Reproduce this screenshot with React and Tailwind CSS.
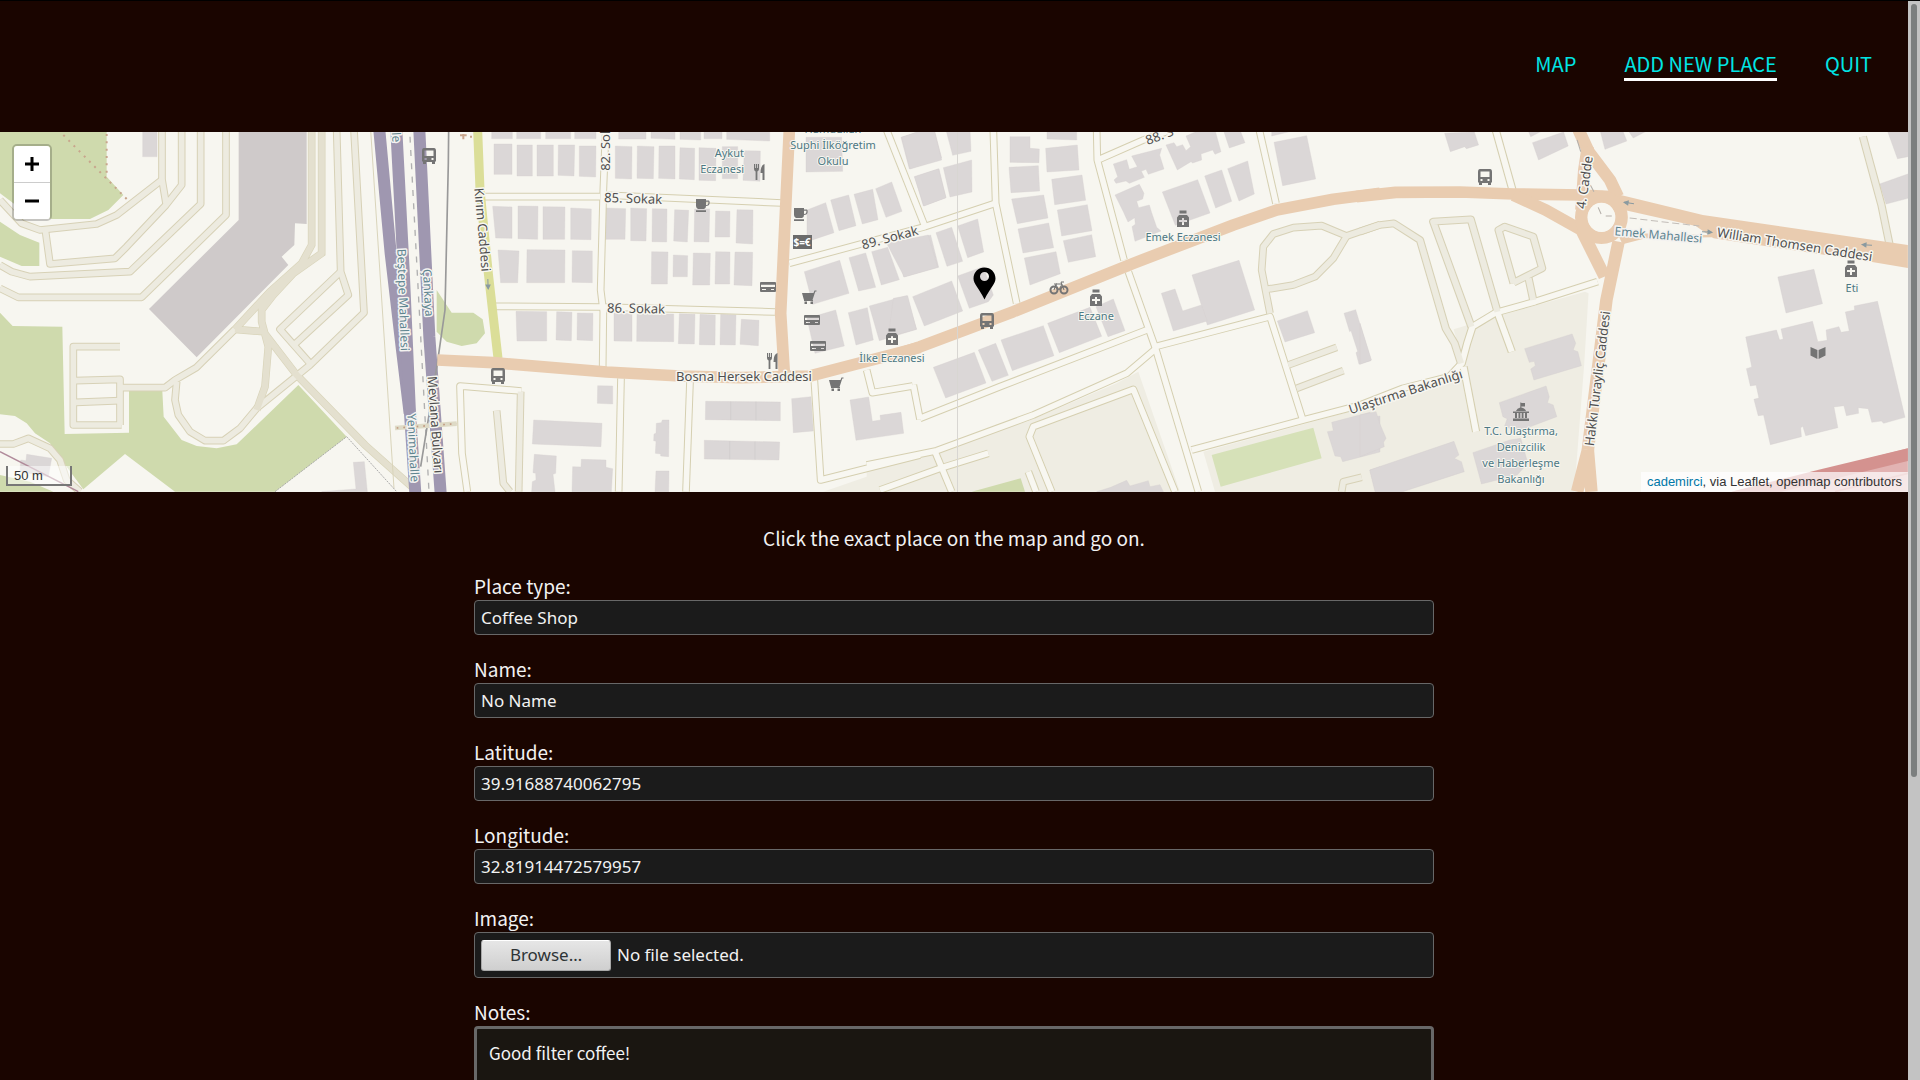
import React, { useRef, useState } from "react";

/* Map geometry, grouped by tile. Every tile has its own drawing space. */
const TILES = {
  a: "translate(0 130) scale(.33333)",
  b: "translate(440 130) scale(.33333)",
  c: "translate(900 130) scale(.33333)",
  d: "translate(1360 130) scale(.35714 .33333)",
};

const LANDUSE = {
  b: ["1150,1085 1440,985 1440,1085"],
  c: [
    "0,990 380,875 650,760 715,725 840,1085 -100,1085 -100,1020",
    "910,965 1440,820 1440,1085 945,1085",
  ],
  d: ["640,490 628,700 600,1085 0,1085 0,840 240,745 290,700 262,598 380,560 630,485"],
};

const GREENS = {
  a: [
    "0,0 320,0 320,140 370,195 325,240 270,267 155,267 60,235 0,190",
    "0,275 60,315 118,338 118,408 65,408 0,380",
    "0,548 38,588 187,590 194,912 387,908 387,783 487,783 491,860 545,930 590,948 650,955 710,943 895,765 1040,920 825,1085 525,1085 375,972 250,1078 200,1010 150,940 105,910 80,880 45,858 0,853",
    "0,1035 90,1055 160,1085 0,1085",
  ],
  b: ["-10,480 35,548 100,548 128,568 135,610 110,640 65,648 20,635 -10,605"],
  c: ["215,1085 362,1045 375,1085"],
};

const PITCHES = { c: ["935,975 1240,893 1265,985 962,1070"] };

const STADIUM = "716,0 920,0 920,282 885,280 883,345 845,380 865,405 590,682 447,537 716,270";

const BUILDINGS = {
  a: [
    "428,0 471,0 471,80 428,80",
    "80,973 155,985 145,1040 60,1025 62,990 78,992",
    "1060,997 1093,995 1102,1085 965,1085 1068,1077",
  ],
  b: [
    "155,0 217,0 217,26 155,26", "230,0 302,0 302,26 230,26", "317,0 392,0 392,26 317,26", "404,0 468,0 468,26 404,26",
    "536,0 618,0 618,27 536,27", "633,0 705,0 705,28 633,25", "720,0 782,0 782,30 720,28", "792,0 846,0 846,26 792,26", "860,0 989,0 989,33 860,28",
    "162,42 216,42 216,133 162,133", "231,45 277,45 277,138 231,138", "291,45 340,45 340,138 291,138", "355,45 404,45 402,138 354,136", "418,48 468,48 467,141 418,139",
    "526,48 576,50 575,147 526,145", "592,48 642,50 640,146 591,145", "657,48 705,48 705,147 656,145", "720,53 764,55 763,149 718,147", "777,53 828,55 827,152 777,151",
    "847,50 893,50 893,146 847,146", "913,62 961,63 960,154 909,151",
    "158,229 216,231 216,325 167,324", "234,228 294,229 293,328 234,326", "309,230 375,231 374,328 309,328", "392,234 454,237 453,329 392,328",
    "497,234 557,236 555,328 497,328", "572,234 620,236 618,333 572,332", "637,236 681,237 680,336 636,335", "704,239 746,241 742,336 701,333", "764,237 809,237 807,336 762,335", "827,243 870,244 869,321 825,321", "891,239 939,240 938,342 888,339",
    "174,360 237,363 233,458 182,458", "261,359 375,360 374,458 260,458", "397,362 457,363 457,458 396,457",
    "635,365 684,366 682,462 634,462", "700,375 743,377 742,440 699,440", "760,369 811,370 809,465 758,465", "827,365 870,366 869,462 825,462", "885,366 938,367 936,467 882,465",
    "228,544 320,545 320,633 231,633", "350,545 396,547 394,632 348,630", "412,549 459,550 458,632 411,630",
    "522,549 576,551 576,634 522,633", "591,551 701,552 701,635 590,634", "718,551 765,553 763,642 715,641", "780,553 826,555 825,645 778,644", "842,553 888,555 886,645 840,644", "904,568 957,571 955,647 900,643",
    "1098,22 1205,22 1208,124 1098,126",
    "1101,240 1157,218 1182,308 1101,335", "1172,210 1226,195 1248,287 1197,302", "1242,193 1298,178 1314,269 1267,282", "1307,176 1355,156 1386,244 1338,262",
    "1093,425 1199,391 1227,490 1118,523", "1227,383 1277,369 1307,472 1256,483", "1295,365 1343,352 1378,449 1324,465", "1372,350 1440,325 1472,315 1496,412 1391,441",
    "1101,565 1187,540 1213,648 1125,670", "1225,548 1282,533 1300,630 1248,645", "1288,528 1400,497 1430,598 1318,632",
    "1383,22 1440,5 1480,-10 1505,84 1408,117", "1424,140 1497,116 1518,203 1450,228",
    "473,767 518,768 518,822 472,820", "281,870 486,880 483,950 277,942",
    "283,973 349,978 347,1030 339,1033 345,1085 275,1085 277,1055 288,1050 287,1030 279,1028",
    "424,988 498,990 498,1012 518,1016 514,1085 396,1085 398,1010 423,1011",
    "667,870 687,870 686,980 662,978 662,972 646,970 648,934 641,932 642,912 648,910 649,880 664,878",
    "648,1023 687,1023 686,1085 645,1085",
    "797,814 1021,816 1021,872 796,869", "793,931 1019,936 1017,990 793,987", "1055,806 1113,800 1120,903 1060,908",
    "1230,810 1286,801 1297,874 1322,870 1320,856 1383,847 1391,910 1248,931",
  ],
  c: [
    "5,22 100,-12 125,90 30,117", "138,0 210,0 213,64 158,76", "43,140 115,117 138,203 72,228", "130,113 215,90 216,186 150,201",
    "-40,340 85,315 113,412 13,441", "108,308 155,292 188,394 141,409", "173,288 233,267 251,366 203,383",
    "-20,505 23,497 49,598 -35,620", "38,500 155,453 188,543 73,588", "173,438 250,410 280,495 265,515 208,535",
    "330,20 390,20 390,55 418,57 417,98 330,97", "441,0 530,0 530,30 441,27", "437,55 532,45 537,120 441,126",
    "327,112 415,107 419,183 333,188", "455,148 546,135 557,211 464,224", "335,207 431,195 444,264 352,281", "472,240 562,224 576,302 485,318",
    "354,297 446,279 461,353 369,369", "490,332 575,314 587,380 505,397", "373,384 468,365 481,431 390,465",
    "100,712 223,667 258,759 137,804", "235,660 287,640 325,736 276,754", "303,630 430,587 462,677 337,722", "443,580 570,532 605,619 478,668", "588,530 640,507 675,602 624,620",
    "640,102 680,89 688,118 712,110 695,78 785,55 779,75 792,117 745,133 738,118 724,124 733,142 688,160 678,153 648,160 642,150 653,140",
    "645,195 718,163 732,190 728,207 710,214 716,233 748,225 755,248 770,292 783,303 705,334 696,290 706,283 704,263 684,276 670,245",
    "798,45 822,38 830,50 848,44 858,62 872,50 858,18 900,0 945,0 963,65 945,73 938,60 903,72 905,90 878,99 873,95 832,120",
    "787,186 893,149 930,249 826,286", "914,138 965,120 995,214 947,234", "983,116 1043,93 1063,192 1017,213",
    "970,0 1020,0 1035,38 988,54", "1122,37 1220,17 1247,147 1148,167", "1115,0 1190,0 1115,18",
    "876,435 1017,391 1064,540 922,585 904,525",
    "784,490 825,477 848,543 904,525 922,573 820,603",
    "1132,573 1222,542 1244,608 1155,636", "1332,550 1367,539 1413,692 1377,703 1368,668 1373,664 1353,602 1349,605",
    "1295,877 1410,847 1420,860 1440,858 1440,966 1328,995 1322,980 1305,978 1282,905 1300,902",
    "632,1072 680,1051 690,1068 745,1052 750,1070 780,1064 790,1085 590,1085", "1410,1020 1440,1010 1440,1072 1425,1075",
  ],
  d: [
    "237,10 320,6 332,45 298,56 293,50 253,65", "483,38 570,6 583,48 500,90", "470,0 515,0 478,20", "672,0 735,0 747,33 686,58", "750,0 808,0 765,24",
    "1478,6 1534,6 1534,80 1505,86", "1455,162 1534,132 1534,205 1473,222", "0,580 32,690 0,703",
    "1170,441 1271,418 1295,521 1193,549",
    "1080,621 1166,600 1175,630 1185,627 1179,597 1267,574 1282,635 1308,631 1305,600 1341,590 1347,607 1370,603 1359,546 1385,540 1384,528 1449,514 1526,862 1466,880 1460,873 1433,877 1423,836 1395,833 1396,850 1362,857 1355,827 1327,831 1338,893 1248,917 1240,889 1234,893 1236,920 1149,944 1130,855 1115,857 1103,808 1117,804 1109,765 1093,768 1082,716 1097,711",
    "461,656 594,612 604,640 597,660 610,665 620,707 487,750 478,717 491,707 488,694 474,697",
    "390,818 521,768 530,800 525,818 541,825 551,860 440,905 405,888 412,866 400,860",
    "316,968 420,930 450,925 470,1000 440,1035 340,1062 332,1030",
    "0,855 45,845 55,880 73,925 66,937 68,950 0,980", "27,1020 263,934 277,975 264,985 284,995 292,1025 120,1085 42,1085",
  ],
};

/* Ordinary streets */
const STREETS = {
  b: [
    "M497,0 L490,180 L482,480 L490,545 L488,712",
    "M135,200 H480 M490,195 L1025,219",
    "M165,529 L482,531 M490,531 L1005,546",
    "M543,745 L536,1085", "M750,755 L738,1085", "M1123,750 L1142,1050 L1440,975",
    "M244,783 L60,768 L66,970 L82,1085",
    "M1280,720 L1297,788 L1418,768",
  ],
  c: [
    "M280,0 L287,220 L350,520", "M-332,400 L75,290 L285,220", "M-40,0 L75,290",
    "M590,0 L592,90 L672,390", "M598,88 L730,30 L800,5", "M1078,0 L1128,220",
    "M685,425 L765,650 L895,1085", "M60,865 L300,770 L740,600",
    "M-100,1005 L0,985 L110,962 L400,855 L680,730 L765,658",
    "M765,650 L1110,560 L1207,865", "M875,960 L1210,870 L1440,810",
    "M40,765 L60,868", "M825,1085 L700,778 L400,890 L388,920 L455,1085",
    "M105,965 L155,1085", "M-60,1080 L120,1015 L265,970", "M385,1025 L408,1085",
  ],
  d: [
    "M0,825 L120,775 L250,740 L285,700 L300,640 L315,590 L380,548 L490,515 L665,455",
    "M290,710 L325,905", "M385,548 L425,665", "M380,0 L427,180",
  ],
};

/* Service ways */
const SERVICE = {
  a: [
    "M0,210 L65,280 L120,300 L290,282 L350,255 L488,148",
    "M486,0 V148 L498,220",
    "M545,0 V165 L498,225 L380,350 L345,385 L150,402 L136,300",
    "M602,0 V222 L390,425 L90,440 L35,425 L0,405",
    "M678,0 V255 L425,502 H55 L0,475",
    "M1010,0 L1022,425 L1045,495 L885,642", "M1022,425 L840,598 L930,700",
    "M1062,0 L1092,548 L930,705 L770,835 L720,895 L670,932 H615 L570,905 L535,855 L525,810 L530,755",
    "M360,650 H220 V885 H365", "M225,752 L360,748 V885", "M228,817 L360,812",
    "M0,942 H40 L85,925 L150,955 L180,990 L200,1050 L240,1085",
    "M360,773 H495 L525,750 L590,712 L705,598",
  ],
  b: ["M242,785 L236,1085", "M170,842 L190,1060 L210,1085"],
  c: [
    "M1110,550 L1085,420 L1090,350 L1120,312 L1180,293 L1265,287 L1340,318 L1300,385 L1245,440 L1180,465 L1100,478",
    "M1340,318 L1440,284", "M1165,705 L1310,652", "M1190,775 L1330,722", "M1325,1085 L1330,1055 L1385,1042",
  ],
  d: [
    "M0,305 L55,285 L95,280 L168,330 L240,595 L265,640 L283,700",
    "M312,590 L205,275 L310,268 L385,545",
    "M485,510 L472,445 M430,460 L388,300 L405,290 L485,320 L510,415 L430,458",
    "M1408,20 L1460,225 L1483,345",
  ],
};

/* Stadium perimeter roads */
const PERIMETER = [
  "M935,0 V345 L905,400 L810,485 L705,598",
  "M965,0 V370 L880,430 L820,495 L785,540 V575 L805,650 L795,770 L770,840",
  "M705,598 L790,605 L890,735 L1095,945 L1235,1070",
];

const PRIMARY = {
  b: ["M-8,690 L160,698 L500,726 L720,738 L900,743 L1110,738 L1440,652", "M1048,0 L1022,550 L1033,730"],
  c: ["M0,670 L60,650 L340,545 L700,400 L1000,285 L1130,240 L1300,208 L1440,190"],
  d: [
    "M-10,200 L100,187 L280,186 L430,192 L620,195 L700,200",
    "M612,0 L640,65 L700,150 L722,200",
    "M638,50 L628,120 L620,240", "M430,196 L520,240 L620,300 L685,440",
    "M724,335 L690,510 L638,960", "M638,960 L608,1085 M638,960 L648,1085",
  ],
};

const tileKeys = ["a", "b", "c", "d"];

function Shapes({ data, className }) {
  return tileKeys.map((k) => (
    <g key={k} transform={TILES[k]} className={className}>
      {(data[k] || []).map((p) => <polygon key={p} points={p} />)}
    </g>
  ));
}

function Ways({ data, className, width }) {
  return tileKeys.map((k) => (
    <g key={k} transform={TILES[k]} className={className} fill="none" strokeWidth={width} strokeLinejoin="round">
      {(data[k] || []).map((d) => <path key={d} d={d} />)}
    </g>
  ));
}

const ROAD_LABELS = [
  { t: "85. Sokak", x: 633, y: 203, r: 2 },
  { t: "86. Sokak", x: 636, y: 313, r: 1 },
  { t: "89. Sokak", x: 891, y: 242, r: -15 },
  { t: "88. S", x: 1161, y: 140, r: -20 },
  { t: "82. Sok", x: 610, y: 149, r: -90 },
  { t: "Kırım Caddesi", x: 478, y: 230, r: 85 },
  { t: "Bosna Hersek Caddesi", x: 744, y: 381, r: 0 },
  { t: "Mevlana Bulvarı", x: 431, y: 425, r: 86 },
  { t: "Ulaştırma Bakanlığı", x: 1407, y: 396, r: -18 },
  { t: "Hakkı Turayliç Caddesi", x: 1602, y: 379, r: -83 },
  { t: "William Thomsen Caddesi", x: 1794, y: 249, r: 9 },
  { t: "4. Cadde", x: 1589, y: 183, r: -82 },
];

const AREA_LABELS = [
  { t: "Beştepe Mahallesi", x: 399, y: 300, r: 88 },
  { t: "Çankaya", x: 424, y: 293, r: 87 },
  { t: "Yenimahalle", x: 409, y: 448, r: 87 },
  { t: "lle", x: 392, y: 136, r: 86 },
  { t: "Emek Mahallesi", x: 1658, y: 239, r: 5 },
];

const PLACE_LABELS = [
  { lines: ["Aykut", "Eczanesi"], x: 744, y: 157, end: true },
  { lines: ["Hamdullah", "Suphi İlköğretim", "Okulu"], x: 833, y: 133 },
  { lines: ["İlke Eczanesi"], x: 892, y: 362 },
  { lines: ["Emek Eczanesi"], x: 1183, y: 241 },
  { lines: ["Eczane"], x: 1096, y: 320 },
  { lines: ["Eti"], x: 1852, y: 292 },
  { lines: ["T.C. Ulaştırma,", "Denizcilik", "ve Haberleşme", "Bakanlığı"], x: 1521, y: 435 },
];

const GLYPHS = {
  bus: (
    <path fillRule="evenodd" d="M-5,-8 H5 Q7,-8 7,-5 V5 L6,6 V8 H3 V6 H-3 V8 H-6 V6 L-7,5 V-5 Q-7,-8 -5,-8Z M-4.500,-5.500 V0 H4.500 V-5.500Z M-4.500,2 V4 H-2.500 V2Z M2.500,2 V4 H4.500 V2Z" />
  ),
  cup: (
    <path fillRule="evenodd" d="M-6,-6 H4 V-4.500 H7 Q8,-4 7.500,-1 Q7,1 4,1 Q4,3.500 2,4 H-4 Q-6,3 -6,1Z M4,-3.300 V0 Q6,0 6.300,-1.500 L6.500,-3.300Z M-6,5.300 H4 V7 H-6Z" />
  ),
  fork: (
    <path d="M-5,-8 H-4 V-4 H-3.200 V-8 H-2 V-4 H-1.200 V-8 H0 V-3 Q0,-1.500 -1.600,-0.500 V8 H-3.400 V-0.500 Q-5,-1.500 -5,-3Z M5.500,-8 V8 H3.500 V1 H1.500 Q1.500,-7 5.500,-8Z" />
  ),
  card: (
    <path fillRule="evenodd" d="M-7,-5 H7 Q8,-5 8,-4 V4 Q8,5 7,5 H-7 Q-8,5 -8,4 V-4 Q-8,-5 -7,-5Z M-7,-2.300 V0 H7 V-2.300Z M-6,2 V3 H-2 V2Z M3,2 V3 H6 V2Z" />
  ),
  cart: (
    <path d="M-7,-4 H4.500 L5.500,-6.500 H7.500 V-5.500 H6.300 L3.500,3 H4 V4 H-5 V3 L-5.500,1.500Z M-4.500,4.500 H-2 V7 H-4.500Z M1.500,4.500 H4 V7 H1.500Z" />
  ),
  pharmacy: (
    <path fillRule="evenodd" d="M-3.500,-8.500 H3.500 V-5.500 H-3.500Z M-4,-4 H4 L6,-1.500 V8 H-6 V-1.500Z M-1,-1 V1 H-4 V3 H-1 V6 H1 V3 H4 V1 H1 V-1Z" />
  ),
  book: <path d="M-7.500,-6 L-0.600,-3 V6 L-7.500,2.500Z M7.500,-6 L0.600,-3 V6 L7.500,2.500Z" />,
  hall: (
    <path d="M-0.700,-9.500 H0.300 V-9 L4,-9 V-5.500 H0.300 V-4.500 Q4,-4 5,-1 H-5 Q-4,-4 -0.700,-4.500Z M-8,-0.500 H8 V1 H-8Z M-6,1 H-4 V6 H-6Z M-2.500,1 H-0.700 V6 H-2.500Z M0.700,1 H2.500 V6 H0.700Z M4,1 H6 V6 H4Z M-8,6.500 H8 V9 H-8Z" />
  ),
};

const POIS = [
  ["bus", 429, 156], ["bus", 498, 376], ["bus", 987, 321], ["bus", 1485, 177],
  ["cup", 702, 205], ["cup", 800, 214],
  ["fork", 759, 172], ["fork", 772, 361],
  ["card", 768, 287], ["card", 812, 320], ["card", 818, 346],
  ["cart", 809, 297], ["cart", 836, 384],
  ["pharmacy", 892, 337], ["pharmacy", 1183, 219], ["pharmacy", 1096, 298], ["pharmacy", 1851, 269],
  ["book", 1818, 353], ["hall", 1521, 412],
];

function Arrow({ x, y, r }) {
  return (
    <path transform={`translate(${x} ${y}) rotate(${r})`} d="M-5,0 H5 M5,0 L1,-2 V2Z" className="fill-[#8a9aa0] stroke-[#8a9aa0]" strokeWidth="1" />
  );
}

function StreetMap() {
  return (
    <svg
      viewBox="0 132 1908 360"
      preserveAspectRatio="xMidYMid slice"
      className="block h-full w-full bg-[#f7f6f0] font-['Noto_Sans',sans-serif]"
      role="img"
      aria-label="Street map"
    >
      <Shapes data={LANDUSE} className="fill-[#efede3]" />
      <Shapes data={GREENS} className="fill-[#cfdaad]" />
      <Shapes data={PITCHES} className="fill-[#d6e1b8]" />
      <polygon transform={TILES.a} points={STADIUM} className="fill-[#cfcaca]" />
      <Shapes data={BUILDINGS} className="fill-[#dbd7d7] stroke-[#d3cece]" />

      <g transform={TILES.b} className="stroke-[#cfcaca]" strokeWidth="2">
        <path d="M872,815 V870 M948,815 V871 M869,933 V988 M945,935 V989" />
      </g>

      <g transform={TILES.d}>
        <polygon points="1534,955 1534,1085 1040,1085 1290,1022" className="fill-[#e2b3b2]" />
        <polygon points="1534,955 1534,993 1180,1085 1040,1085 1290,1018" className="fill-[#d4928f]" />
        <path d="M1330,1085 L1534,1030" className="stroke-[#d4928f]" strokeWidth="5" />
      </g>

      <Ways data={STREETS} className="stroke-[#d5cfb0]" width="23" />
      <Ways data={SERVICE} className="stroke-[#d7d1b6]" width="23" />
      <g transform={TILES.a} fill="none" className="stroke-[#d9d4ba]" strokeWidth="23"><path d={PERIMETER.join(" ")} /></g>
      <Ways data={STREETS} className="stroke-[#f8f7f1]" width="17" />
      <Ways data={SERVICE} className="stroke-[#edebe0]" width="17" />
      <g transform={TILES.a} fill="none" className="stroke-[#e4e0cf]" strokeWidth="19" strokeLinejoin="round"><path d={PERIMETER.join(" ")} /></g>

      <g transform={TILES.a} fill="none">
        <path d="M1112,0 L1182,1075" className="stroke-[#d9d4ba]" strokeWidth="3" />
        <path d="M1138,0 L1172,370 L1206,660 L1229,850" className="stroke-[#9f97b0]" strokeWidth="36" />
        <path d="M1189,0 L1211,420 L1230,850 L1246,1090" className="stroke-[#9f97b0]" strokeWidth="36" />
        <path d="M1258,0 L1288,620 L1322,1090" className="stroke-[#9f97b0]" strokeWidth="36" />
        <path d="M1230,20 L1287,1085" className="stroke-[#b0b0b0]" strokeWidth="4" strokeDasharray="18 22" />
        <path d="M1346,0 L1345,100 L1335,540 L1312,700 L1262,1010" className="stroke-[#999999]" strokeWidth="5" />
        <path d="M1185,894 L1370,881" className="stroke-[#dedac6]" strokeWidth="14" />
        <path d="M1190,894 L1370,881" className="stroke-[#c29a80]" strokeWidth="5" strokeDasharray="5 15" />
        <path d="M190,15 L380,207 M320,12 V145" className="stroke-[#c8a58c]" strokeWidth="6" strokeDasharray="6 16" />
        <path d="M825,1085 L1040,920 L1190,1085" className="stroke-[#aaaaaa]" strokeWidth="3" strokeDasharray="6 3" />
        <path d="M0,965 L235,1085" className="stroke-[#b08a9a]" strokeWidth="4" />
      </g>

      <path transform={TILES.b} d="M113,0 L120,180 L145,430 L174,685" fill="none" className="stroke-[#dbde98]" strokeWidth="27" />
      <path transform={TILES.b} d="M60,16 H80 M70,12 V28 M90,20 H96" className="stroke-[#c8a58c]" strokeWidth="6" />
      <Ways data={PRIMARY} className="stroke-[#e9ccb0]" width="35" />
      <g transform={TILES.d} className="fill-[#e9ccb0]">
        <polygon points="710,190 960,255 1534,345 1534,414 1430,395 990,325 940,288 740,240" />
        <polygon points="720,308 1000,316 1200,350 990,322 800,325 735,343" />
        <ellipse cx="676" cy="262" rx="56" ry="62" fill="none" className="stroke-[#e9ccb0]" strokeWidth="36" />
        <ellipse cx="676" cy="262" rx="39" ry="43" className="fill-[#f8f7f1]" />
        <path d="M755,264 L950,288" fill="none" className="stroke-[#c2bdb8]" strokeWidth="3" strokeDasharray="20 10" />
        <path d="M667,232 L675,252 M688,258 H705 M608,30 L618,65 M645,165 L655,185" fill="none" className="stroke-[#b5b0aa]" strokeWidth="3" />
      </g>

      <rect x="957" y="132" width="1" height="360" className="fill-[#d8d6d2]" />

      <Arrow x={488} y={284} r={88} />
      <Arrow x={1629} y={203} r={188} />
      <Arrow x={1707} y={232} r={4} />
      <Arrow x={1867} y={245} r={184} />
      <g className="fill-[#747474]">
        {POIS.map(([k, x, y]) => (
          <g key={`${k}-${x}-${y}`} transform={`translate(${x} ${y})`}>{GLYPHS[k]}</g>
        ))}
      </g>
      <g transform="translate(1059 288)" fill="none" className="stroke-[#747474]" strokeWidth="2">
        <circle cx="-5" cy="2" r="3.500" />
        <circle cx="5" cy="2" r="3.500" />
        <path d="M-5,2 L-3,-4 H3 L0,2 L-3,-3 M5,2 L2,-6 H5 M-5,-4 H-2" strokeWidth="1" />
      </g>
      <rect x="793" y="235" width="19" height="14" className="fill-[#6b6b6b]" />
      <text x="802" y="246" textAnchor="middle" className="fill-white text-[10px] font-bold">$=€</text>

      <g className="fill-[#4f4f4f] stroke-[#f7f6f0] text-[13px] [paint-order:stroke]" strokeWidth="3" strokeLinejoin="round" textAnchor="middle">
        {ROAD_LABELS.map((l) => (
          <text key={l.t} transform={`translate(${l.x} ${l.y}) rotate(${l.r})`}>{l.t}</text>
        ))}
      </g>
      <g className="fill-[#5f8590] stroke-[#f3f2f0] text-[12px] [paint-order:stroke]" strokeWidth="3" strokeLinejoin="round" textAnchor="middle">
        {AREA_LABELS.map((l) => (
          <text key={l.t} transform={`translate(${l.x} ${l.y}) rotate(${l.r})`}>{l.t}</text>
        ))}
      </g>
      <g className="fill-[#4d7883] stroke-[#f7f6f0] text-[11px] [paint-order:stroke]" strokeWidth="2" strokeLinejoin="round">
        {PLACE_LABELS.map((l) => (
          <text key={l.lines[0]} y={l.y} textAnchor={l.end ? "end" : "middle"}>
            {l.lines.map((line, i) => (
              <tspan key={line} x={l.x} dy={i ? 16 : 0}>{line}</tspan>
            ))}
          </text>
        ))}
      </g>

      <path
        fillRule="evenodd"
        d="M984.500,267.500 C990.500,267.500 995.500,272 995.500,278.500 C995.500,284 990,288 984.500,299.500 C979,288 973.500,284 973.500,278.500 C973.500,272 978.500,267.500 984.500,267.500Z M984.500,272 A4.500,4.500 0 1 0 984.500,281 A4.500,4.500 0 1 0 984.500,272Z"
        className="fill-black"
      />
    </svg>
  );
}

const box = "block w-full rounded-[4px] border border-[#686868] bg-[#1b1b1b] text-[#f2f2f2]";
const inputFont = "font-['Noto_Sans',sans-serif] text-[17px]";

function Field({ id, label, children }) {
  return (
    <div>
      <label htmlFor={id} className="block h-7 text-[19px] leading-7">{label}</label>
      {children}
    </div>
  );
}

export default function App() {
  const fileRef = useRef(null);
  const [file, setFile] = useState("No file selected.");
  const nav = "border-b-[3px] leading-7 text-[#00e5e5]";

  return (
    <div className="flex h-screen overflow-hidden border-t border-black bg-[#1a0500] font-['Noto_Sans_CJK_SC','Noto_Sans',sans-serif] text-[#f2f2f2]">
      <div className="min-w-0 flex-1">
        <header className="flex h-[131px] items-center justify-end px-9 pb-0.5">
          <nav className="flex gap-12 text-[20px]">
            <a href="#map" className={`${nav} border-transparent`}>MAP</a>
            <a href="#add" aria-current="page" className={`${nav} border-white`}>ADD NEW PLACE</a>
            <a href="#quit" className={`${nav} border-transparent`}>QUIT</a>
          </nav>
        </header>

        <section className="relative h-[360px] overflow-hidden font-['Liberation_Sans',sans-serif]">
          <StreetMap />
          <div className="absolute left-3 top-3 flex flex-col rounded-[5px] border-2 border-black/20 bg-clip-padding">
            <button type="button" aria-label="Zoom in" className="flex h-[37px] w-9 items-center justify-center rounded-t-[3px] border-b border-[#cccccc] bg-white text-black">
              <svg viewBox="0 0 14 14" className="size-[14px]" aria-hidden="true"><path d="M0,7 H14 M7,0 V14" className="stroke-black" strokeWidth="3" /></svg>
            </button>
            <button type="button" aria-label="Zoom out" className="flex h-9 w-9 items-center justify-center rounded-b-[3px] bg-white text-black">
              <svg viewBox="0 0 14 14" className="size-[14px]" aria-hidden="true"><path d="M0,7 H14" className="stroke-black" strokeWidth="3" /></svg>
            </button>
          </div>
          <div className="absolute bottom-[6px] left-[6px] h-5 w-[66px] border-2 border-t-0 border-[#777777] bg-white/50 px-[6px] text-[13px] leading-[19px] text-[#333333]">50 m</div>
          <div className="absolute bottom-0 right-0 bg-white/70 px-[6px] text-[13px] leading-5 text-[#333333]">
            <a href="#author" className="text-[#0078a8]">cademirci</a>, via Leaflet, openmap contributors
          </div>
        </section>

        <form className="mx-auto mt-8 flex w-full max-w-[960px] flex-col gap-5" onSubmit={(e) => e.preventDefault()}>
          <p className="text-center text-[19px] leading-7">Click the exact place on the map and go on.</p>
          <Field id="type" label="Place type:">
            <select id="type" className={`${box} ${inputFont} h-[35px] appearance-none px-[6px]`}>
              <option>Coffee Shop</option>
              <option>Restaurant</option>
            </select>
          </Field>
          <Field id="name" label="Name:">
            <input id="name" defaultValue="No Name" className={`${box} ${inputFont} h-[35px] px-[6px]`} />
          </Field>
          <Field id="lat" label="Latitude:">
            <input id="lat" defaultValue="39.91688740062795" className={`${box} ${inputFont} h-[35px] px-[6px]`} />
          </Field>
          <Field id="lng" label="Longitude:">
            <input id="lng" defaultValue="32.81914472579957" className={`${box} ${inputFont} h-[35px] px-[6px]`} />
          </Field>
          <Field id="image" label="Image:">
            <div className={`${box} ${inputFont} relative h-[46px] px-[6px]`}>
              <div className="flex h-full items-center gap-[6px]">
                <button
                  type="button"
                  onClick={() => fileRef.current.click()}
                  className="h-[31px] w-[130px] rounded-[3px] border border-[#a8a8a8] border-t-white bg-linear-to-b from-[#e6e6e6] to-[#cfcfcf] text-[#2e3436]"
                >
                  Browse…
                </button>
                <span>{file}</span>
              </div>
              <input
                ref={fileRef}
                id="image"
                type="file"
                tabIndex={-1}
                className="sr-only"
                onChange={(e) => setFile(e.target.files[0] ? e.target.files[0].name : "No file selected.")}
              />
            </div>
          </Field>
          <Field id="notes" label="Notes:">
            <textarea
              id="notes"
              rows={5}
              defaultValue="Good filter coffee!"
              className="block w-full resize-none rounded-[4px] border-[3px] border-[#686868] bg-[#1a1611] px-3 py-[10px] text-[17px] leading-7 text-[#f2f2f2]"
            />
          </Field>
        </form>
      </div>

      <div className="flex w-3 shrink-0 justify-center bg-[#c3c3c3] py-[3px]" aria-hidden="true">
        <div className="h-[72%] w-[6px] rounded-full bg-[#7c7f7f]" />
      </div>
    </div>
  );
}
